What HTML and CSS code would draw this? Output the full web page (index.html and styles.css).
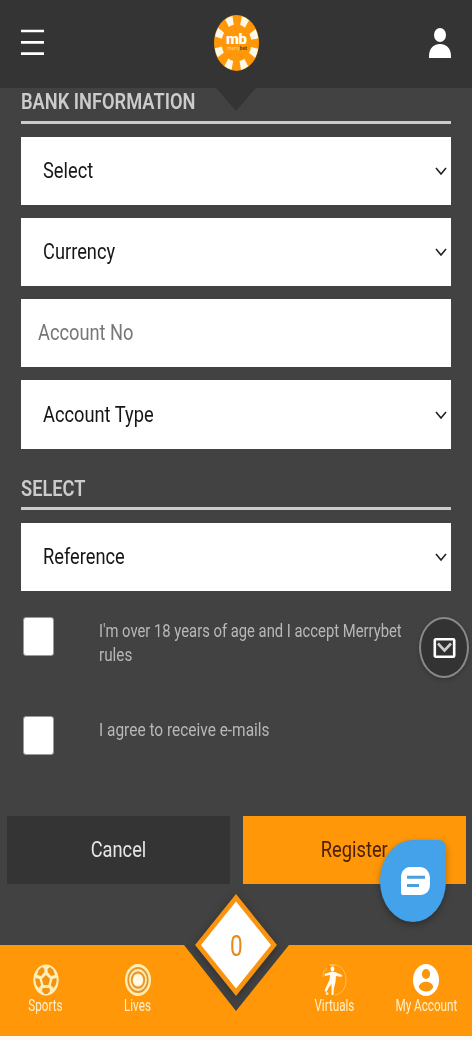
FILE: index.html
```html
<!DOCTYPE html>
<html lang="en">
<head>
<meta charset="utf-8">
<title>Merrybet Registration</title>
<link rel="stylesheet" href="styles.css">
</head>
<body>
<div class="page">
  <header class="header">
    <svg class="menu" viewBox="0 0 23 27"><path d="M0 2h23M0 13.3h23M0 24.6h23" stroke="#fff" stroke-width="2.7"/></svg>
    <div class="logo">
      <svg class="chip" viewBox="0 0 56 56" preserveAspectRatio="none">
        <circle cx="28" cy="28" r="28" fill="#ff9708"/>
        <circle cx="28" cy="28" r="23" fill="none" stroke="#fff8e6" stroke-width="9" stroke-dasharray="8 10.064" stroke-dashoffset="-5.03"/>
      </svg>
      <span class="logo-text">mb</span>
      <span class="logo-sub">merry<b>bet</b></span>
    </div>
    <svg class="user" viewBox="0 0 22 30"><ellipse cx="11" cy="7" rx="6" ry="7" fill="#fff"/><path d="M0 30v-2C0 20 5 16 11 16s11 4 11 12v2z" fill="#fff"/></svg>
    <svg class="pointer" viewBox="0 0 40 23"><path d="M0 0h40L20 23z" fill="#343434"/></svg>
  </header>

  <main class="form">
    <h2 class="heading bank"><span class="t t-bank">BANK INFORMATION</span></h2>
    <div class="fields">
      <div class="field"><span class="t t-select">Select</span><svg class="arrow" viewBox="0 0 12 9"><path d="M1 1l5 6 5-6"/></svg></div>
      <div class="field"><span class="t t-currency">Currency</span><svg class="arrow" viewBox="0 0 12 9"><path d="M1 1l5 6 5-6"/></svg></div>
      <div class="field input"><span class="t t-number">Account No</span></div>
      <div class="field"><span class="t t-type">Account Type</span><svg class="arrow" viewBox="0 0 12 9"><path d="M1 1l5 6 5-6"/></svg></div>
    </div>
    <h2 class="heading select"><span class="t t-heading">SELECT</span></h2>
    <div class="fields">
      <div class="field"><span class="t t-reference">Reference</span><svg class="arrow" viewBox="0 0 12 9"><path d="M1 1l5 6 5-6"/></svg></div>
    </div>
    <div class="check first"><i class="box"></i><p class="label"><span class="t t-age">I'm over 18 years of age and I accept Merrybet</span><br><span class="t t-rules">rules</span></p></div>
    <div class="check"><i class="box"></i><p class="label"><span class="t t-mails">I agree to receive e-mails</span></p></div>
  </main>

  <div class="actions">
    <div class="button cancel"><span class="t t-cancel">Cancel</span></div>
    <div class="button register"><span class="t t-register">Register</span></div>
  </div>

  <nav class="nav">
    <div class="tab sports">
      <svg class="tab-icon" viewBox="0 0 32 32" preserveAspectRatio="none"><circle cx="16" cy="16" r="15.6" fill="#ffeeb8"/><g fill="#f39310"><path d="M16 11l5 4-2 6h-6l-2-6z"/><path d="M14 8l-4 4-5-1 2-5 4-3 3 2zM18 8l4 4 5-1-2-5-4-3-3 2zM3 14l5 1 2 6-3 3-3-3-1-4zM29 14l-5 1-2 6 3 3 3-3 1-4zM12 24h8l1 3-3 3h-4l-3-3z"/></g></svg>
      <span class="t t-sports">Sports</span>
    </div>
    <div class="tab lives">
      <svg class="tab-icon" viewBox="0 0 32 32" preserveAspectRatio="none"><circle cx="16" cy="16" r="16" fill="#ffedb5"/><circle cx="16" cy="16" r="12" fill="none" stroke="#e9952b" stroke-width="2.2"/><circle cx="16" cy="16" r="7.7" fill="none" stroke="#e9952b" stroke-width="2.2"/><circle cx="16" cy="16" r="5.5" fill="#fff9e6"/></svg>
      <span class="t t-lives">Lives</span>
    </div>
    <div class="tab virtuals">
      <svg class="tab-icon" viewBox="0 0 26 32" preserveAspectRatio="none"><path d="M6 4C3 6 2 9 2 13M14 1c7 1 11 7 11 15s-4 14-11 15" fill="none" stroke="#ffc052" stroke-width="1"/><path d="M8 1h6" stroke="#ffd98c"/><ellipse cx="11.500" cy="5" rx="1.900" ry="2.700" fill="#fff"/><path d="M9.500 8h4.500l7 3-.5 2-5.500-1-.5 6-1.500 6-.5 7h-2l0-8 0-3-3 4-2 4-2-1 2-5 3-6 .5-5-5 1-.5-2z" fill="#fffbed"/><circle cx="6" cy="29.500" r="1.500" fill="#ffe4a5"/></svg>
      <span class="t t-virtuals">Virtuals</span>
    </div>
    <div class="tab account">
      <svg class="tab-icon" viewBox="0 0 32 32" preserveAspectRatio="none"><circle cx="16" cy="16" r="16" fill="#fff"/><circle cx="16" cy="10" r="5" fill="#fa960b"/><path d="M7 23c2-7 16-7 18 0-3 6-15 6-18 0z" fill="#fa960b"/></svg>
      <span class="t t-account">My Account</span>
    </div>
  </nav>

  <div class="slip">
    <svg class="diamond" viewBox="0 0 82 102"><path d="M41 0l41 51-41 51L0 51z" fill="#f99410"/><path d="M41 7.5L76 51 41 94.500 6 51z" fill="#fff"/></svg>
    <span class="t t-zero">0</span>
  </div>
  <div class="mail">
    <svg class="mail-icon" viewBox="0 0 22 20"><rect x="1.300" y="1.300" width="19.400" height="17.400" rx="1" fill="#303030" stroke="#fff" stroke-width="2.600"/><path d="M4.500 5.500L11 12.500 17.500 5.500" fill="none" stroke="#ccc" stroke-width="2.600"/></svg>
  </div>
  <div class="chat">
    <svg class="chat-icon" viewBox="0 0 29 28"><path d="M9 0h10c6 0 10 5 10 12v5c0 7-4 11-10 11H2c-1 0-2-1-2-2V11C0 4 4 0 9 0z" fill="#fff"/><path d="M6 10.300h18M6 18.500h12" stroke="#4a9fe0" stroke-width="3"/></svg>
  </div>
</div>
</body>
</html>
```
FILE: styles.css
```css
* { box-sizing: border-box; }
body { margin: 0; background: #fff; font-family: Roboto, "Liberation Sans", sans-serif; }
.page { position: relative; display: flex; flex-direction: column; width: 472px; height: 1040px; overflow: hidden; background: #424242; border-bottom: 4px solid #fffaf0; }
.t { display: inline-block; white-space: nowrap; transform: scaleX(.83); transform-origin: left center; }

.header { position: relative; flex: none; height: 88px; padding: 0 21px; display: flex; align-items: center; justify-content: space-between; background: #343434; }
.menu { width: 23px; height: 27px; margin-top: -3px; }
.logo { position: absolute; left: 214px; top: 15px; width: 45px; height: 56px; }
.chip { display: block; width: 45px; height: 56px; }
.logo-text { position: absolute; left: 12px; top: 18px; width: 24px; font-size: 15px; line-height: 12px; font-weight: 900; letter-spacing: -.5px; color: #fff; }
.logo-sub { position: absolute; left: 13px; top: 30px; font-size: 5px; line-height: 6px; color: #ffd590; }
.logo-sub b { color: #704000; }
.user { width: 22px; height: 30px; margin-top: -2px; }
.pointer { position: absolute; left: 216px; top: 88px; width: 40px; height: 23px; }

.form { flex: none; height: 728px; padding: 0 21px; }
.heading { margin: 0; border-bottom: 3px solid #ccc; font-size: 22px; line-height: 27px; font-weight: 600; color: #ccc; }
.bank { height: 35.500px; }
.select { height: 35px; margin-top: 26px; }
.fields { display: flex; flex-direction: column; gap: 13px; padding-top: 13px; }
.field { height: 68.330px; padding: 0 4px 0 22px; display: flex; align-items: center; justify-content: space-between; background: #fff; color: #161616; font-size: 22px; line-height: 28px; }
.input { padding-left: 17px; color: #777; }
.arrow { width: 12px; height: 9px; margin-top: 1px; fill: none; stroke: #222; stroke-width: 1.600; }
.check { display: flex; height: 99px; padding-left: 2px; }
.first { margin-top: 26px; }
.box { flex: none; width: 31px; height: 39px; border: 1px solid #999; border-radius: 3px; background: #fff; }
.label { min-width: 0; margin: 2px 0 0 45px; font-size: 18px; line-height: 23.500px; color: #b8b8b8; }

.actions { flex: none; height: 129px; padding: 0 6.500px; display: grid; grid-template-columns: 1fr 1fr; gap: 13px; }
.button { height: 68px; padding-bottom: 1px; display: flex; align-items: center; justify-content: center; font-size: 22px; }
.button .t { transform-origin: center; }
.cancel { background: #343434; color: #e6e6e6; }
.register { background: #ff9708; color: #4a2108; }

.nav { flex: none; height: 91px; padding-top: 19px; display: grid; grid-template-columns: 91px 93px 105px 90px 94px; background: #ff9708; clip-path: polygon(0 0, 184px 0, 236px 66px, 289px 0, 100% 0, 100% 100%, 0 100%); }
.tab { display: flex; flex-direction: column; align-items: center; width: 100%; color: #fff0cc; font-size: 16px; line-height: 18px; }
.tab .t { transform-origin: center; margin-top: 1px; }
.tab-icon { flex: none; width: 26px; height: 32px; }
.virtuals { grid-column: 4; }
.slip { position: absolute; left: 195px; top: 894px; width: 82px; height: 102px; display: flex; align-items: center; justify-content: center; filter: drop-shadow(0 2px 4px rgba(0,0,0,.3)); }
.diamond { position: absolute; inset: 0; }
.slip .t { position: relative; font-size: 30px; color: #e58b1b; transform-origin: center; }
.mail { position: absolute; left: 419px; top: 617px; width: 50px; height: 61px; border: 2px solid #898989; border-radius: 50%; background: #333; display: flex; align-items: center; justify-content: center; box-shadow: 0 2px 4px rgba(0,0,0,.2); }
.mail-icon { width: 23px; height: 20px; }
.chat { position: absolute; left: 380px; top: 840px; width: 66px; height: 82px; border-radius: 33px 7px 33px 33px / 41px 8px 41px 41px; background: #43a2ea; display: flex; align-items: center; justify-content: center; padding-left: 4px; box-shadow: 0 3px 7px rgba(0,0,0,.3); }
.chat-icon { width: 29px; height: 28px; }
.t-age { transform: scaleX(.822); }
.t-rules { transform: scaleX(.85); }
.t-mails { transform: scaleX(.858); }
.tab .t { transform: scaleX(.73); }
.slip .t-zero { transform: scaleX(.75); }
```
